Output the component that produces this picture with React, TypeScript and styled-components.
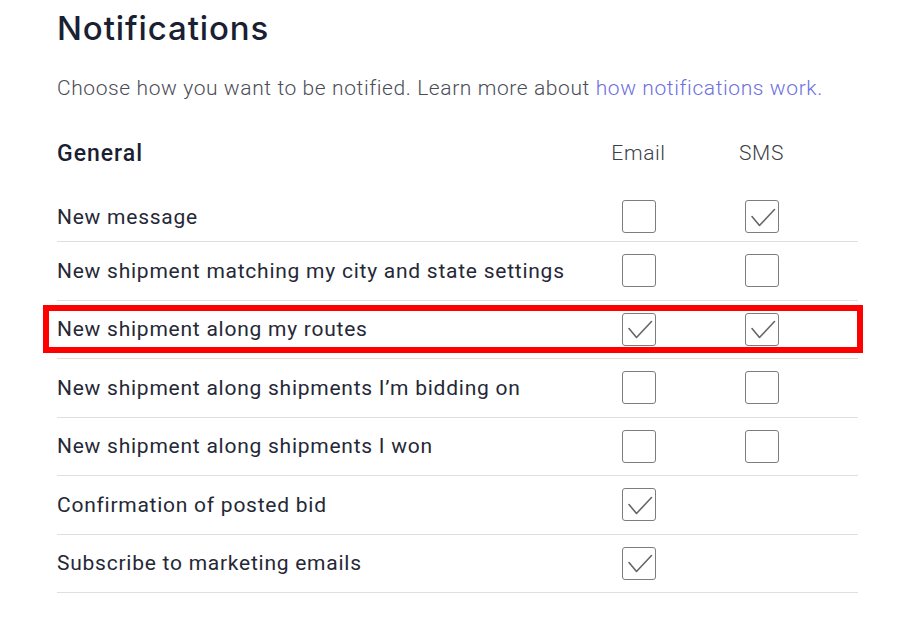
import React from 'react';
import styled, { createGlobalStyle } from 'styled-components';

const GlobalStyle = createGlobalStyle`
  html, body {
    margin: 0;
    padding: 0;
    background: #ffffff;
  }
  body {
    font-family: Roboto, 'Liberation Sans', sans-serif;
  }
`;

type Pref = {
  label: string;
  email: boolean;
  sms?: boolean;
  highlight?: boolean;
};

const prefs: Pref[] = [
  { label: 'New message', email: false, sms: true },
  { label: 'New shipment matching my city and state settings', email: false, sms: false },
  { label: 'New shipment along my routes', email: true, sms: true, highlight: true },
  { label: 'New shipment along shipments I\u2019m bidding on', email: false, sms: false },
  { label: 'New shipment along shipments I won', email: false, sms: false },
  { label: 'Confirmation of posted bid', email: true },
  { label: 'Subscribe to marketing emails', email: true },
];

function Checkbox({ checked }: { checked: boolean }) {
  return (
    <Box>
      {checked && (
        <svg width="34" height="34" viewBox="0 0 34 34" fill="none">
          <path d="M7 16.5 L14.5 25.5 L29.5 9.5" stroke="#666" strokeWidth="1.6" strokeLinecap="round" strokeLinejoin="round" />
        </svg>
      )}
    </Box>
  );
}

export default function App() {
  return (
    <>
      <GlobalStyle />
      <Page>
        <Title>Notifications</Title>
        <Intro>
          Choose how you want to be notified. Learn more about{' '}
          <Link href="#">how notifications work.</Link>
        </Intro>
        <Table>
          <HeadRow>
            <Section>General</Section>
            <ColHead>Email</ColHead>
            <ColHead>SMS</ColHead>
          </HeadRow>
          {prefs.map((p, i) => (
            <Row key={i} $first={i === 0} $highlight={!!p.highlight}>
              <Label>{p.label}</Label>
              <Cell><Checkbox checked={p.email} /></Cell>
              <Cell>{p.sms !== undefined && <Checkbox checked={p.sms} />}</Cell>
            </Row>
          ))}
        </Table>
      </Page>
    </>
  );
}

const Page = styled.div`
  padding: 6px 0 0 57px;
  width: 801px;
`;

const Title = styled.h1`
  margin: 0;
  font-family: Inter, 'Open Sans', sans-serif;
  font-size: 33px;
  font-weight: 500;
  line-height: 44px;
  color: #1b1f33;
  letter-spacing: 0.9px;
`;

const Intro = styled.p`
  margin: 24px 0 0;
  font-size: 21px;
  font-weight: 300;
  line-height: 28px;
  letter-spacing: 0.6px;
  color: #4a4d57;
`;

const Link = styled.a`
  color: #6d6fe0;
  text-decoration: none;
`;

const Table = styled.div`
  margin-top: 27px;
  display: flex;
  flex-direction: column;
`;

const HeadRow = styled.div`
  display: grid;
  grid-template-columns: 1fr 123px 123px 35px;
  align-items: center;
  height: 48px;
  margin-bottom: 15px;
`;

const Section = styled.div`
  font-size: 23px;
  font-weight: 500;
  letter-spacing: 1px;
  color: #1b1f33;
`;

const ColHead = styled.div`
  text-align: center;
  font-size: 21px;
  font-weight: 300;
  letter-spacing: 0.6px;
  color: #3c3f4a;
`;

const Row = styled.div<{ $first: boolean; $highlight: boolean }>`
  position: relative;
  display: grid;
  grid-template-columns: 1fr 123px 123px 35px;
  align-items: center;
  height: ${p => (p.$first ? 50 : 58.5)}px;
  border-bottom: 1px solid #e2dfda;
  box-sizing: border-box;

  ${p =>
    p.$highlight &&
    `
    &::after {
      content: '';
      position: absolute;
      left: -14px;
      right: -5px;
      top: 4px;
      bottom: 5px;
      border: 6px solid #ff0000;
      pointer-events: none;
    }
  `}
`;

const Label = styled.div`
  font-size: 21px;
  font-weight: 400;
  letter-spacing: 0.75px;
  color: #252836;
`;

const Cell = styled.div`
  display: flex;
  justify-content: center;
  align-items: center;
`;

const Box = styled.div`
  width: 34px;
  height: 33px;
  box-sizing: border-box;
  border: 1.5px solid #7d7d7d;
  border-radius: 3px;
  display: flex;
  align-items: center;
  justify-content: center;
  background: #fff;

  svg {
    flex: none;
    margin: -1.5px;
  }
`;
